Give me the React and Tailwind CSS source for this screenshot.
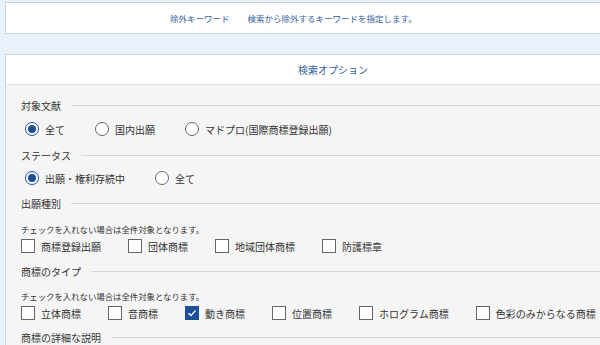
import { useState } from 'react';

function Legend({ children, className = '' }) {
  return (
    <div className={`flex items-center h-[20px] text-[10px] text-[#333] ${className}`}>
      <span>{children}</span>
      <div className="flex-1 h-px bg-[#d6d6d6] ml-[10px]" />
    </div>
  );
}

function Radio({ label, checked, onClick }) {
  return (
    <label onClick={onClick} className="flex items-center cursor-pointer mr-[30px]">
      <span
        className={`w-[14px] h-[14px] rounded-full flex items-center justify-center bg-white ${
          checked ? 'border-[1.5px] border-[#1d4f99]' : 'border border-[#666]'
        }`}
      >
        {checked && <span className="w-[8px] h-[8px] rounded-full bg-[#1d4f99]" />}
      </span>
      <span className="ml-[6px]">{label}</span>
    </label>
  );
}

function Check({ label, checked, onClick }) {
  return (
    <label onClick={onClick} className="flex items-center cursor-pointer mr-[27px]">
      {checked ? (
        <span className="w-[14px] h-[14px] bg-[#1d4f99] flex items-center justify-center">
          <svg width="10" height="10" viewBox="0 0 10 10">
            <path d="M1.5 5.2 L4 7.6 L8.6 2.4" fill="none" stroke="white" strokeWidth="1.4" />
          </svg>
        </span>
      ) : (
        <span className="w-[14px] h-[14px] border border-[#666] bg-white" />
      )}
      <span className="ml-[6px]">{label}</span>
    </label>
  );
}

export default function App() {
  const [target, setTarget] = useState('all');
  const [status, setStatus] = useState('alive');
  const [kinds, setKinds] = useState({});
  const [types, setTypes] = useState({ motion: true });

  const kindList = [
    ['reg', '商標登録出願'],
    ['group', '団体商標'],
    ['region', '地域団体商標'],
    ['defense', '防護標章'],
  ];
  const typeList = [
    ['solid', '立体商標'],
    ['sound', '音商標'],
    ['motion', '動き商標'],
    ['position', '位置商標'],
    ['holo', 'ホログラム商標'],
    ['color', '色彩のみからなる商標'],
  ];

  return (
    <div className="w-[600px] h-[345px] overflow-hidden bg-[#e9f2fb] font-['Noto_Sans_CJK_JP',sans-serif]">
      <div className="pl-[5px] pt-[2px]">
        {/* 除外キーワード */}
        <div className="w-[656px] h-[32px] bg-white border border-[#cfd5dd] flex items-center text-[8.5px] text-[#35639b]">
          <span className="ml-[164px]">除外キーワード</span>
          <span className="ml-[18px]">検索から除外するキーワードを指定します。</span>
        </div>

        {/* 検索オプション */}
        <div className="mt-[20px] w-[656px] border border-[#cfd5dd] bg-[#f5f5f5]">
          <div className="h-[30px] bg-white border-b border-[#e2e2e2] flex items-center justify-center text-[10px] text-[#2f5f9a]">
            検索オプション
          </div>
          <div className="pl-[15px] pt-[10px] pb-4 text-[10px] text-[#333]">
            <Legend>対象文献</Legend>
            <div className="flex items-center h-[20px] mt-[4px] pl-[4px]">
              <Radio label="全て" checked={target === 'all'} onClick={() => setTarget('all')} />
              <Radio label="国内出願" checked={target === 'jp'} onClick={() => setTarget('jp')} />
              <Radio label="マドプロ(国際商標登録出願)" checked={target === 'mp'} onClick={() => setTarget('mp')} />
            </div>

            <Legend className="mt-[6px]">ステータス</Legend>
            <div className="flex items-center h-[20px] mt-[3px] pl-[4px]">
              <Radio label="出願・権利存続中" checked={status === 'alive'} onClick={() => setStatus('alive')} />
              <Radio label="全て" checked={status === 'all'} onClick={() => setStatus('all')} />
            </div>

            <Legend className="mt-[5px]">出願種別</Legend>
            <div className="mt-[10px] h-[12px] leading-[12px] text-[8.4px]">チェックを入れない場合は全件対象となります。</div>
            <div className="flex items-center h-[20px] mt-[1px]">
              {kindList.map(([k, l]) => (
                <Check key={k} label={l} checked={!!kinds[k]} onClick={() => setKinds({ ...kinds, [k]: !kinds[k] })} />
              ))}
            </div>

            <Legend className="mt-[5px]">商標のタイプ</Legend>
            <div className="mt-[9px] h-[12px] leading-[12px] text-[8.4px]">チェックを入れない場合は全件対象となります。</div>
            <div className="flex items-center h-[20px] mt-[1px] whitespace-nowrap">
              {typeList.map(([k, l]) => (
                <Check key={k} label={l} checked={!!types[k]} onClick={() => setTypes({ ...types, [k]: !types[k] })} />
              ))}
            </div>

            <Legend className="mt-[4px]">商標の詳細な説明</Legend>
          </div>
        </div>
      </div>
    </div>
  );
}
